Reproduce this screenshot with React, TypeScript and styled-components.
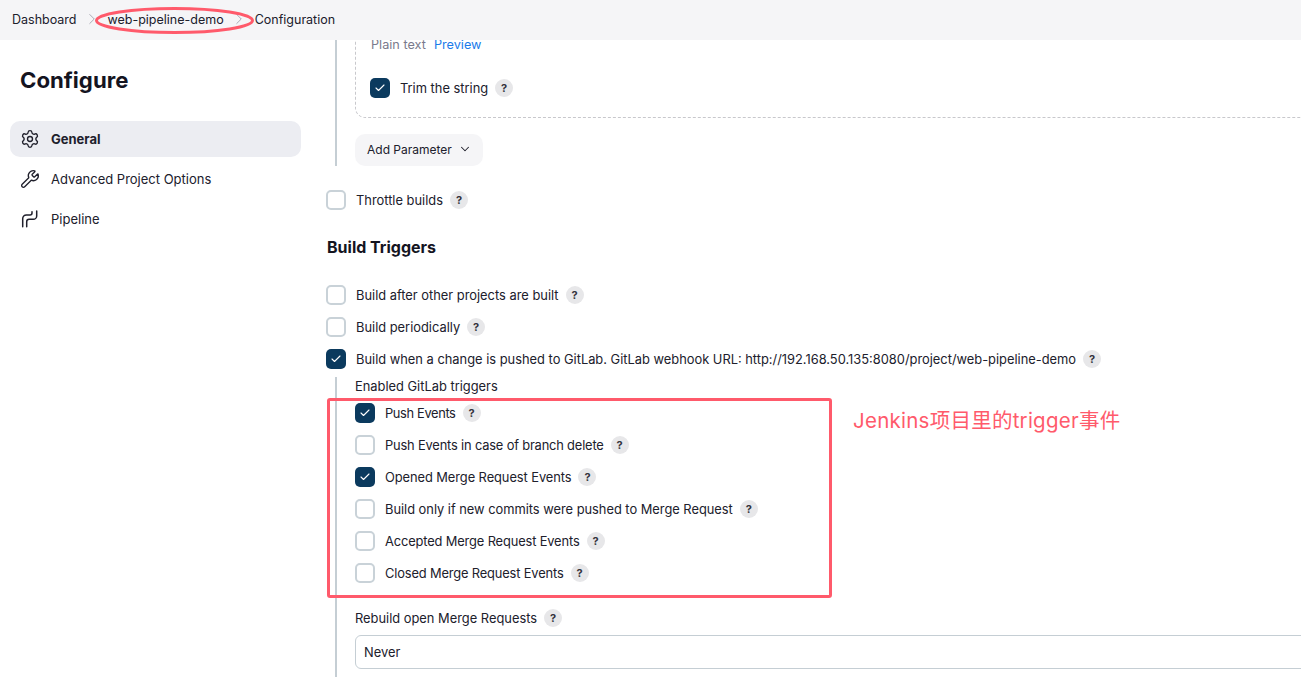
import React from "react";
import styled, { createGlobalStyle } from "styled-components";
import { Settings, Wrench, ChevronDown, ChevronRight, Check } from "lucide-react";

const GlobalStyle = createGlobalStyle`
  html, body {
    margin: 0;
    padding: 0;
    background: #ffffff;
  }
  body {
    font-family: Inter, "Noto Sans CJK SC", sans-serif;
    font-size: 13px;
    color: #14141f;
  }
  * {
    box-sizing: border-box;
  }
`;

const Page = styled.div`
  position: relative;
  width: 1301px;
  height: 677px;
  overflow: hidden;
`;

const TopBar = styled.header`
  position: relative;
  z-index: 2;
  display: flex;
  align-items: center;
  height: 40px;
  padding: 0 0 2px 12px;
  background: #f5f5f7;
`;

const Crumb = styled.span`
  font-size: 12.5px;
  color: #20202c;
`;

const CrumbArrow = styled.span`
  display: flex;
  width: 31px;
  justify-content: center;
  color: #a9a9b3;
`;

const Body = styled.div`
  display: grid;
  grid-template-columns: 326px 1fr;
`;

const Sidebar = styled.aside`
  padding: 0 25px 0 10px;
`;

const PageTitle = styled.h1`
  margin: 24px 0 25px 10px;
  font-size: 22.2px;
  line-height: 32px;
  font-weight: 700;
  color: #14141f;
`;

const NavList = styled.nav`
  display: flex;
  flex-direction: column;
  gap: 4px;
`;

const NavItem = styled.div<{ $active?: boolean }>`
  display: flex;
  align-items: center;
  gap: 11px;
  height: 36px;
  padding-left: 10px;
  border-radius: 10px;
  font-size: 13px;
  font-weight: ${(props) => (props.$active ? 700 : 400)};
  background: ${(props) => (props.$active ? "#ecedf2" : "transparent")};
  color: #20202c;
`;

const Main = styled.main`
  min-width: 0;
`;

const NestedBlock = styled.div`
  margin-left: 9px;
  padding-left: 18px;
  border-left: 2px solid #c5ced4;
`;

const DashedBox = styled.div`
  width: 1000px;
  height: 98px;
  margin-top: -20px;
  padding: 15px 0 0 14px;
  border: 1px dashed #c8c8cc;
  border-radius: 10px;
`;

const PlainLine = styled.div`
  display: flex;
  gap: 8px;
  height: 18px;
  margin-left: 1px;
  line-height: 18px;
  font-size: 12.7px;
  color: #7a7a8c;
`;

const PreviewLink = styled.span`
  color: #1a7bea;
`;

const CheckRow = styled.div<{ $h?: number }>`
  display: flex;
  align-items: center;
  gap: 10px;
  height: ${(props) => props.$h ?? 32}px;
`;

const TrimRow = styled(CheckRow)`
  margin-top: 24px;
`;

const Box = styled.span<{ $on?: boolean }>`
  display: flex;
  flex: none;
  align-items: center;
  justify-content: center;
  width: 20px;
  height: 20px;
  border-radius: 5px;
  color: #ffffff;
  background: ${(props) => (props.$on ? "#0b3a5e" : "#ffffff")};
  border: ${(props) => (props.$on ? "none" : "2px solid #c9d2d8")};
`;

const Label = styled.span<{ $track?: number }>`
  font-size: 12.86px;
  letter-spacing: ${(props) => props.$track ?? 0}px;
  color: #20202c;
  white-space: nowrap;
`;

const Help = styled.span`
  display: flex;
  align-items: center;
  justify-content: center;
  width: 18px;
  height: 18px;
  margin-left: -3px;
  border-radius: 50%;
  background: #e7e7e9;
  font-size: 11px;
  font-weight: 700;
  color: #33333d;
`;

const AddButton = styled.div`
  display: flex;
  align-items: center;
  gap: 6px;
  width: 128px;
  height: 32px;
  margin-top: 16px;
  padding: 0 0 2px 12px;
  border-radius: 10px;
  background: #f5f5f7;
  font-size: 12px;
  color: #20202c;
`;

const ThrottleRow = styled(CheckRow)`
  margin-top: 18px;
`;

const SectionTitle = styled.h2`
  margin: 20px 0 21px 1px;
  font-size: 16px;
  line-height: 22px;
  font-weight: 700;
  color: #14141f;
`;

const TriggerBlock = styled(NestedBlock)`
  height: 300px;
  margin-top: 2px;
`;

const FieldLabel = styled.div`
  display: flex;
  align-items: center;
  gap: 10px;
  height: 18px;
  font-size: 12.86px;
  color: #20202c;
`;

const EventList = styled.div`
  margin-top: 2px;
`;

const RebuildLabel = styled(FieldLabel)`
  margin-top: 20px;
`;

const SelectField = styled.div`
  display: flex;
  align-items: center;
  width: 1000px;
  height: 34px;
  margin-top: 8px;
  padding-left: 8px;
  border: 1px solid #c5ced4;
  border-radius: 6px;
  font-size: 12.86px;
  color: #20202c;
`;

const Ellipse = styled.svg`
  position: absolute;
  z-index: 3;
  top: 6px;
  left: 95px;
`;

const Callout = styled.div`
  position: absolute;
  top: 398px;
  left: 327px;
  width: 505px;
  height: 200px;
  border: 3px solid #ff5a6b;
  border-radius: 3px;
`;

const CalloutText = styled.div`
  position: absolute;
  top: 407px;
  left: 853px;
  font-size: 20.5px;
  line-height: 28px;
  letter-spacing: 0.25px;
  color: #ff5a6b;
  white-space: nowrap;
`;

const PipelineIcon = () => (
  <svg width="20" height="20" viewBox="0 0 20 20" fill="none" stroke="#20202c" strokeWidth="1.5" strokeLinecap="round">
    <path d="M2.7 17.7V9.7a3.7 3.7 0 0 1 3.7-3.7h3.6a2 2 0 0 0 2-2V2.7" />
    <path d="M6.7 17.7v-5a2.4 2.4 0 0 1 2.4-2.4h4.2a3.4 3.4 0 0 0 3.4-3.4V2" />
  </svg>
);

const Option = ({ on, text, track }: { on?: boolean; text: string; track?: number }) => (
  <CheckRow>
    <Box $on={on}>{on && <Check size={12} strokeWidth={2.2} />}</Box>
    <Label $track={track}>{text}</Label>
    <Help>?</Help>
  </CheckRow>
);

const events = [
  { text: "Push Events", on: true, track: -0.36 },
  { text: "Push Events in case of branch delete", track: -0.17 },
  { text: "Opened Merge Request Events", on: true, track: -0.07 },
  { text: "Build only if new commits were pushed to Merge Request", track: -0.02 },
  { text: "Accepted Merge Request Events", track: -0.14 },
  { text: "Closed Merge Request Events", track: -0.15 },
];

export default function App() {
  return (
    <Page>
      <GlobalStyle />
      <TopBar>
        <Crumb>Dashboard</Crumb>
        <CrumbArrow>
          <ChevronRight size={18} strokeWidth={1.3} />
        </CrumbArrow>
        <Crumb>web-pipeline-demo</Crumb>
        <CrumbArrow>
          <ChevronRight size={18} strokeWidth={1.3} />
        </CrumbArrow>
        <Crumb>Configuration</Crumb>
      </TopBar>
      <Ellipse width="160" height="30" viewBox="0 0 160 30">
        <ellipse cx="79.5" cy="14.5" rx="78" ry="12" fill="none" stroke="#ff5a6b" strokeWidth="3" />
      </Ellipse>
      <Body>
        <Sidebar>
          <PageTitle>Configure</PageTitle>
          <NavList>
            <NavItem $active>
              <Settings size={20} strokeWidth={1.6} />
              General
            </NavItem>
            <NavItem>
              <Wrench size={20} strokeWidth={1.6} />
              Advanced Project Options
            </NavItem>
            <NavItem>
              <PipelineIcon />
              Pipeline
            </NavItem>
          </NavList>
        </Sidebar>
        <Main>
          <NestedBlock>
            <DashedBox>
              <PlainLine>
                Plain text <PreviewLink>Preview</PreviewLink>
              </PlainLine>
              <TrimRow $h={20}>
                <Box $on>
                  <Check size={12} strokeWidth={2.2} />
                </Box>
                <Label>Trim the string</Label>
                <Help>?</Help>
              </TrimRow>
            </DashedBox>
            <AddButton>
              Add Parameter <ChevronDown size={14} strokeWidth={1.8} />
            </AddButton>
          </NestedBlock>
          <ThrottleRow $h={32}>
            <Box />
            <Label>Throttle builds</Label>
            <Help>?</Help>
          </ThrottleRow>
          <SectionTitle>Build Triggers</SectionTitle>
          <Option text="Build after other projects are built" />
          <Option text="Build periodically" />
          <Option on text="Build when a change is pushed to GitLab. GitLab webhook URL: http://192.168.50.135:8080/project/web-pipeline-demo" />
          <TriggerBlock>
            <FieldLabel>Enabled GitLab triggers</FieldLabel>
            <EventList>
              {events.map((e) => (
                <Option key={e.text} on={e.on} text={e.text} track={e.track} />
              ))}
            </EventList>
            <RebuildLabel>
              Rebuild open Merge Requests
              <Help>?</Help>
            </RebuildLabel>
            <SelectField>Never</SelectField>
          </TriggerBlock>
        </Main>
      </Body>
      <Callout />
      <CalloutText>Jenkins项目里的trigger事件</CalloutText>
    </Page>
  );
}
